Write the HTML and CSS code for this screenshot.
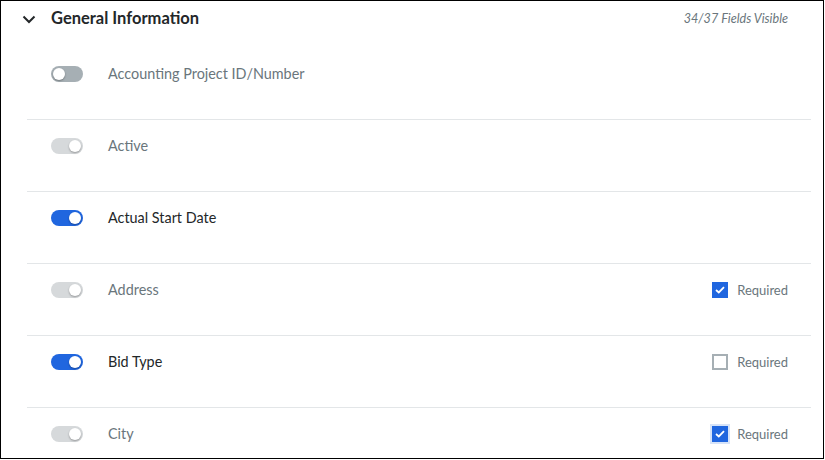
FILE: index.html
```html
<!DOCTYPE html>
<html>
<head>
<meta charset="utf-8">
<link rel="stylesheet" href="styles.css">
</head>
<body>
<div class="frame">
  <div class="header">
    <svg class="chev" width="14" height="9" viewBox="0 0 14 9"><path d="M1.5 1.5 L7 7 L12.5 1.5" fill="none" stroke="#232729" stroke-width="2"/></svg>
    <span class="title">General Information</span>
    <span class="count">34/37 Fields Visible</span>
  </div>
  <div class="list">
    <div class="row">
      <span class="toggle off"><span class="knob"></span></span>
      <span class="label muted">Accounting Project ID/Number</span>
    </div>
    <div class="row">
      <span class="toggle disabled"><span class="knob"></span></span>
      <span class="label muted">Active</span>
    </div>
    <div class="row">
      <span class="toggle on"><span class="knob"></span></span>
      <span class="label">Actual Start Date</span>
    </div>
    <div class="row">
      <span class="toggle disabled"><span class="knob"></span></span>
      <span class="label muted">Address</span>
      <span class="req"><span class="box checked"><svg width="10" height="8" viewBox="0 0 10 8"><path d="M1 4 L3.8 6.5 L9 1.2" fill="none" stroke="#fff" stroke-width="1.8"/></svg></span>Required</span>
    </div>
    <div class="row">
      <span class="toggle on"><span class="knob"></span></span>
      <span class="label">Bid Type</span>
      <span class="req"><span class="box"></span>Required</span>
    </div>
    <div class="row">
      <span class="toggle disabled"><span class="knob"></span></span>
      <span class="label muted">City</span>
      <span class="req"><span class="box checked focus"><svg width="10" height="8" viewBox="0 0 10 8"><path d="M1 4 L3.8 6.5 L9 1.2" fill="none" stroke="#fff" stroke-width="1.8"/></svg></span>Required</span>
    </div>
  </div>
</div>
</body>
</html>
```
FILE: styles.css
```css
html, body {
  margin: 0;
  padding: 0;
  background: #fff;
}
.frame {
  box-sizing: border-box;
  width: 824px;
  height: 459px;
  border: 1px solid #000;
  overflow: hidden;
  font-family: Lato, "Open Sans", sans-serif;
  color: #232729;
}
.header {
  height: 47px;
  display: flex;
  align-items: flex-start;
  padding: 7px 35px 0 21px;
  box-sizing: border-box;
}
.chev {
  margin-top: 7px;
}
.title {
  margin-left: 15px;
  font-size: 16.5px;
  font-weight: 700;
  line-height: 20px;
  color: #232729;
}
.count {
  margin-left: auto;
  margin-top: 3px;
  font-size: 12.6px;
  font-style: italic;
  color: #6a767c;
  line-height: 15px;
}
.list {
  margin: 0 12px 0 26px;
}
.row {
  height: 72px;
  box-sizing: border-box;
  border-bottom: 1px solid #e3e6e8;
  display: flex;
  align-items: flex-start;
  padding: 16px 23px 0 24px;
}
.toggle {
  position: relative;
  width: 32px;
  height: 16px;
  border-radius: 8px;
  margin-top: 2px;
  flex: none;
}
.toggle .knob {
  position: absolute;
  top: 2px;
  width: 12px;
  height: 12px;
  border-radius: 50%;
  background: #fff;
  box-shadow: 0 1px 2px rgba(0,0,0,0.3);
}
.toggle.off { background: #a6afb4; }
.toggle.off .knob { left: 2px; }
.toggle.disabled { background: #d6d9db; }
.toggle.disabled .knob { right: 2px; }
.toggle.on { background: #2066df; }
.toggle.on .knob { right: 2px; }
.label {
  margin-left: 25px;
  font-size: 14.4px;
  line-height: 20px;
  color: #232729;
}
.label.muted { color: #6a767c; }
.req {
  margin-left: auto;
  display: flex;
  align-items: center;
  font-size: 13px;
  line-height: 20px;
  color: #6a767c;
}
.box {
  box-sizing: border-box;
  width: 16px;
  height: 16px;
  border: 2px solid #a6afb4;
  margin-right: 9px;
  display: flex;
  align-items: center;
  justify-content: center;
  background: #fff;
}
.box.checked {
  background: #2066df;
  border-color: #2066df;
}
.box.focus {
  box-shadow: 0 0 0 2px #d6e3f8;
}
```
